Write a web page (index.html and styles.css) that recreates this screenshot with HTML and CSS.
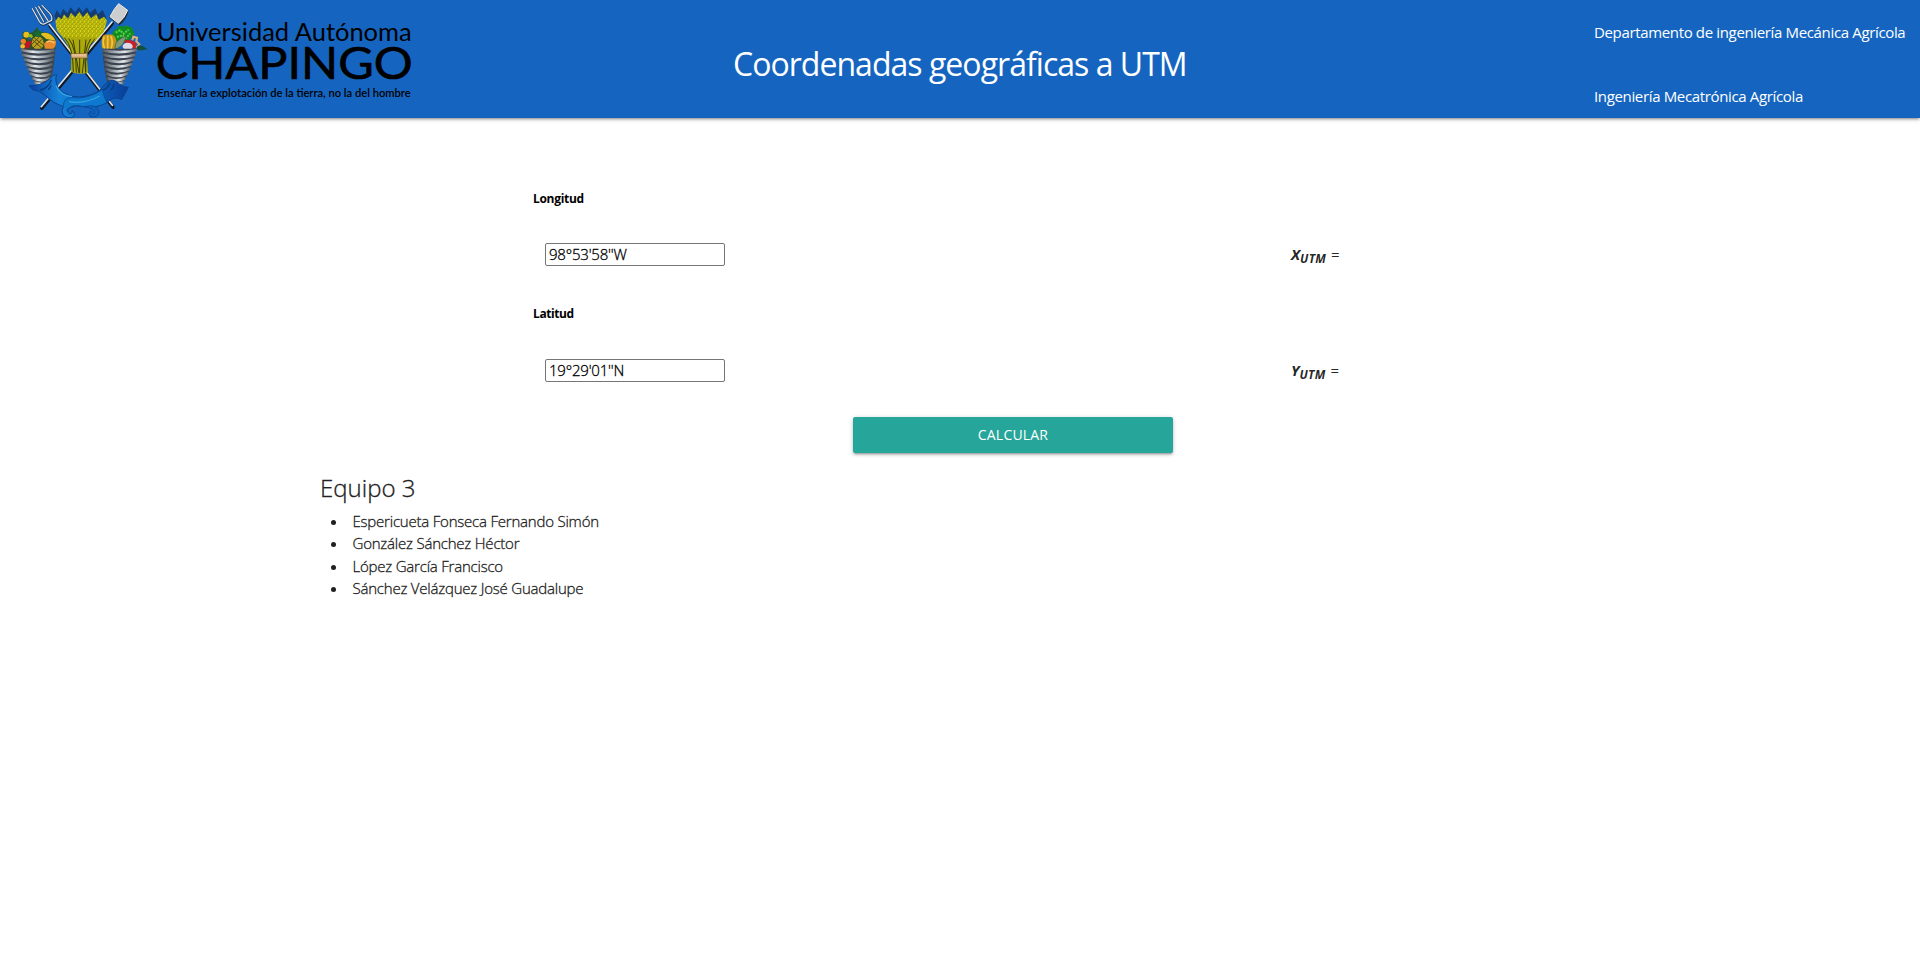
FILE: index.html
```html
<!DOCTYPE html>
<html lang="es">
<head>
<meta charset="utf-8">
<title>Coordenadas geográficas a UTM</title>
<link rel="stylesheet" href="styles.css">
</head>
<body>
<header class="nav">
  <svg class="logo" viewBox="0 0 1290 354" role="img" aria-label="Universidad Autónoma Chapingo">
    <defs>
      <linearGradient id="steel" x1="0" x2="1"><stop offset="0" stop-color="#59616b"/><stop offset=".35" stop-color="#e4e8ec"/><stop offset=".65" stop-color="#a3abb3"/><stop offset="1" stop-color="#4d545c"/></linearGradient>
      <linearGradient id="ribbon" x1="0" x2="1"><stop offset="0" stop-color="#0a3f9c"/><stop offset=".3" stop-color="#1583d8"/><stop offset=".6" stop-color="#0d6cc6"/><stop offset="1" stop-color="#0a3d98"/></linearGradient>
      <pattern id="grain" width="12" height="14" patternUnits="userSpaceOnUse"><rect width="12" height="14" fill="#c3c00c"/><path d="M1 1l4 5M11 2L7 7M2 9l3 4M10 10l-3 3" stroke="#696700" stroke-width="2"/><path d="M6 0v5M1 7v4" stroke="#e8e52a" stroke-width="3"/></pattern>
      <g id="basket">
        <path d="M62 146L166 146Q162 205 150 252Q128 264 106 251Q80 206 62 146Z" fill="#39424e"/>
        <g fill="none" stroke="url(#steel)" stroke-width="8">
          <path d="M62 150Q112 162 166 151"/><path d="M66 164Q116 178 164 164"/><path d="M71 178Q116 193 161 178"/><path d="M76 192Q120 208 159 192"/><path d="M82 206Q122 222 157 206"/><path d="M88 220Q123 236 155 220"/><path d="M96 234Q125 248 152 234"/><path d="M102 247Q126 258 150 247"/>
        </g>
      </g>
    </defs>
    <g fill="none" stroke-linecap="round">
      <path d="M150 78L339 322M337 70L125 325" stroke="#101820" stroke-width="10"/>
      <path d="M148 73L337 316M336 66L124 320" stroke="#dfe4e8" stroke-width="5"/>
      <path d="M98 28L119 66Q126 79 137 72L157 62Q160 50 152 42L127 17M108 23L132 66M117 19L146 64" stroke="#17304f" stroke-width="6"/>
      <path d="M97 26L118 64Q126 77 137 70L155 61Q158 50 150 41L126 16M107 22L131 65M116 19L144 62" stroke="#dfe4e8" stroke-width="3.5"/>
    </g>
    <path d="M356 11L386 32Q379 60 358 76L327 52Q339 28 356 11Z" fill="#222b35"/>
    <path d="M356 11L383 31Q374 54 355 70L330 50Q341 27 356 11Z" fill="#cbcdcf" stroke="#eef0f1" stroke-width="3"/>
    <path d="M163 48L171 30L181 46L189 26L202 40L212 22L225 37L237 21L248 37L260 22L271 38L286 25L293 43L308 30L319 54L309 75L175 75Z" fill="#153c73"/>
    <path d="M166 64L175 50L185 58L192 43L204 56L213 38L226 52L238 35L249 52L262 37L273 55L289 42L296 59L312 50L321 62L311 96L283 126L200 126L171 92Z" fill="url(#grain)"/>
    <path d="M188 112L291 112Q267 136 260 162L264 218Q238 225 213 216L214 162Q207 139 188 112Z" fill="#aba90b"/>
    <g fill="none" stroke="#3b3d05" stroke-width="3">
      <path d="M193 113Q220 140 220 216M206 116Q229 142 229 218M219 119L237 219M239 119L239 219M258 119L247 219M272 117Q249 150 257 217M285 116Q253 150 257 217"/>
    </g>
    <path d="M212 161L262 160L262 174L214 174Z" fill="#ddb17e" stroke="#765b2b" stroke-width="2"/>
    <path d="M217 165H259" stroke="#f4d8ac" stroke-width="3" stroke-dasharray="5 2"/>
    <g>
      <path d="M63 138Q58 121 70 111Q63 102 71 96Q80 91 88 99L99 97L111 82L121 97L135 97Q159 99 168 119L166 149L66 148Z" fill="#295428"/>
      <g fill="#e8bd21"><circle cx="79" cy="104" r="9"/><circle cx="91" cy="109" r="7" fill="#91bb18"/><path d="M120 101Q151 91 167 122L139 117Z"/><ellipse cx="113" cy="129" rx="18" ry="20" fill="#b9a01f"/></g>
      <path d="M98 120L125 144M103 114L130 136M127 117L98 145M119 110L96 132" stroke="#5c4d10" stroke-width="3"/>
      <path d="M110 111L98 91L110 98L112 81L118 98L129 89L120 111Z" fill="#176b34"/>
      <circle cx="70" cy="124" r="8" fill="#ee8022"/><circle cx="68" cy="139" r="7" fill="#f1bb2c"/><path d="M75 133Q81 119 96 125L87 144L75 146Z" fill="#be1624"/><path d="M132 132Q139 115 168 123Q169 143 157 149L135 147Z" fill="#e88a29"/><path d="M140 127Q151 119 163 129" fill="none" stroke="#ffc976" stroke-width="4"/>
      <circle cx="89" cy="116" r="5" fill="#24569b"/>
    </g>
    <g>
      <path d="M336 105Q338 91 350 87Q354 74 368 80Q380 73 388 81Q400 80 399 93Q407 101 396 110L383 126L342 124Z" fill="#128b20"/>
      <path d="M347 98L360 91L371 101L386 89M351 111L367 106L378 114L391 100" fill="none" stroke="#54d449" stroke-width="6" stroke-dasharray="6 3"/>
      <path d="M306 145Q300 99 321 104Q347 97 350 128L344 148Z" fill="#c4931c"/><path d="M313 110Q305 127 314 146M323 106V147M332 108Q341 124 333 147" fill="none" stroke="#f0c83e" stroke-width="5"/>
      <path d="M345 145Q343 124 369 112L378 108Q374 135 351 146Z" fill="#819b79" stroke="#355b3c" stroke-width="2"/>
      <path d="M374 121Q396 116 409 130L407 148L376 139Z" fill="#c62127"/><ellipse cx="383" cy="139" rx="15" ry="11" fill="#dfd8e7"/>
      <path d="M397 121L400 110L411 113L409 124L418 133L409 143" fill="none" stroke="#e4b174" stroke-width="6"/><path d="M410 141Q420 130 442 147Q426 153 412 149Z" fill="#15503b"/>
    </g>
    <use href="#basket"/><use href="#basket" transform="matrix(-1 0 0 1 473 0)"/>
    <path d="M87 257Q121 259 150 236Q157 222 170 224Q163 241 175 264Q198 291 239 291Q282 287 305 266Q309 255 324 247Q337 232 358 252Q371 262 385 262Q375 281 365 299Q344 286 320 308Q284 328 247 319Q226 314 209 323Q196 333 209 342Q220 340 216 332Q227 337 221 350Q204 359 190 345Q182 333 190 320Q160 311 136 287Q123 272 98 269Z" fill="url(#ribbon)" stroke="#0a438f" stroke-width="3"/>
    <path d="M190 319Q190 294 213 293Q259 300 307 269Q313 294 321 308Q284 327 246 319Q214 311 199 332" fill="#0d79cf" stroke="#0b438d" stroke-width="2"/>
    <path d="M253 320Q267 315 285 319Q302 330 295 345Q285 355 270 350Q263 339 273 333Q274 344 283 340Q287 327 253 320Z" fill="#0d61ba" stroke="#093f88" stroke-width="2"/>
    <path d="M154 239Q145 266 120 270M309 270Q323 266 330 249M341 251Q341 265 332 270M153 256Q151 263 145 269" fill="none" stroke="#083c82" stroke-width="4"/>
    <path d="M168 257Q180 286 216 290M207 305Q254 313 299 288" fill="none" stroke="#37a2e3" stroke-width="4"/>
    <g class="wordmark">
      <text class="w-top" x="470" y="124" textLength="765" lengthAdjust="spacingAndGlyphs">Universidad Autónoma</text>
      <text class="w-main" x="467" y="238" textLength="771" lengthAdjust="spacingAndGlyphs">CHAPINGO</text>
      <text class="w-sub" x="472" y="290" textLength="760" lengthAdjust="spacingAndGlyphs">Enseñar la explotación de la tierra, no la del hombre</text>
    </g>
  </svg>
  <h1 class="title">Coordenadas geográficas a UTM</h1>
  <ul class="departments"><li>Departamento de ingeniería Mecánica Agrícola</li><li>Ingeniería Mecatrónica Agrícola</li></ul>
</header>
<main class="container">
  <form class="form">
    <div class="row">
      <div class="field"><label class="label" for="lon">Longitud</label><input class="input" id="lon" type="text" value="98°53'58''W"></div>
      <div class="result"><b class="symbol">X<sub>UTM</sub></b> =</div>
    </div>
    <div class="row">
      <div class="field"><label class="label label-lat" for="lat">Latitud</label><input class="input" id="lat" type="text" value="19°29'01''N"></div>
      <div class="result"><b class="symbol">Y<sub>UTM</sub></b> =</div>
    </div>
    <button class="button" type="button">CALCULAR</button>
  </form>
  <section class="team">
    <h2 class="team-title">Equipo 3</h2>
    <ul class="team-list"><li>Espericueta Fonseca Fernando Simón</li><li>González Sánchez Héctor</li><li>López García Francisco</li><li>Sánchez Velázquez José Guadalupe</li></ul>
  </section>
</main>
</body>
</html>
```
FILE: styles.css
```css
* { box-sizing: border-box; }
body { margin: 0; background: #fff; color: rgba(0,0,0,.87); font: 400 15px/22.5px "Open Sans", "Noto Sans", sans-serif; }
h1, h2, ul { margin: 0; padding: 0; font-weight: 400; }
.nav { display: grid; grid-template-columns: 733px 861px 1fr; height: 118px; background: #1565c0; color: #fff; box-shadow: 0 2px 2px 0 rgba(0,0,0,.14), 0 3px 1px -2px rgba(0,0,0,.12), 0 1px 5px 0 rgba(0,0,0,.2); }
.logo { display: block; width: 430px; height: 118px; }
.wordmark { fill: #000; font-family: Lato, sans-serif; }
.w-top { font-size: 76px; }
.w-main { font-size: 136px; stroke: #000; stroke-width: 2px; }
.w-sub { font-size: 35px; font-weight: 600; }
.title { font-size: 32px; line-height: 128px; letter-spacing: -.97px; white-space: nowrap; }
.departments { list-style: none; line-height: 64px; white-space: nowrap; letter-spacing: -.35px; }
.container { width: 1280px; margin: 0 auto; }
.form { display: flex; flex-direction: column; padding: 72px 0 0 213px; }
.row { display: grid; grid-template-columns: 758px 1fr; height: 116px; }
.field { display: flex; flex-direction: column; align-items: flex-start; }
.label { height: 53px; font-size: 12px; line-height: 18px; font-weight: 700; color: #000; letter-spacing: -.3px; }
.label-lat { line-height: 16px; letter-spacing: -.4px; }
.input { width: 180px; height: 23px; margin-left: 12px; padding: 0 3px 1px; border: 1px solid #767676; border-radius: 2px; background: #fff; color: #000; font: 300 15px/20px "Open Sans", sans-serif; letter-spacing: -.2px; -webkit-text-stroke: .3px #000; }
.result { padding-top: 53px; white-space: nowrap; }
.symbol { margin-right: 1px; font-style: italic; }
.result sub { font-size: 12px; line-height: 0; letter-spacing: .3px; position: relative; bottom: -.25em; vertical-align: baseline; }
.button { width: 320px; height: 36px; margin: -5px 0 0 320px; padding: 0; border: 0; border-radius: 2px; background: #26a69a; color: #fff; font: 400 14px/36px "Open Sans", sans-serif; letter-spacing: .2px; box-shadow: 0 2px 2px 0 rgba(0,0,0,.14), 0 3px 1px -2px rgba(0,0,0,.12), 0 1px 5px 0 rgba(0,0,0,.2); }
.team { padding-top: 17px; color: #212121; -webkit-text-stroke: .3px #212121; }
.team-title { font-size: 24px; line-height: 36px; font-weight: 300; }
.team-list { padding: 3.5px 0 0 28px; font-weight: 300; letter-spacing: -.21px; }
.team-list li { padding-left: 4.5px; white-space: nowrap; }
```
